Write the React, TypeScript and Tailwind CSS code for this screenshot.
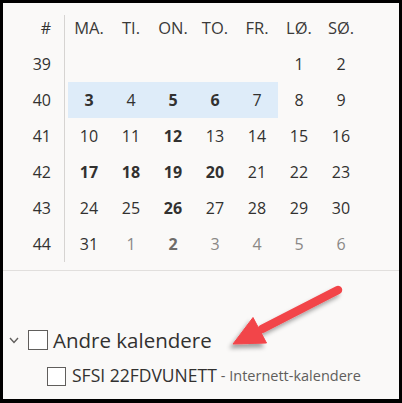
import React from "react";

type Day = { n?: number; bold?: boolean; muted?: boolean };

const headers = ["MA.", "TI.", "ON.", "TO.", "FR.", "LØ.", "SØ."];

const weeks: { no: number; days: Day[]; highlight?: boolean }[] = [
  { no: 39, days: [{}, {}, {}, {}, {}, { n: 1 }, { n: 2 }] },
  {
    no: 40,
    highlight: true,
    days: [{ n: 3, bold: true }, { n: 4 }, { n: 5, bold: true }, { n: 6, bold: true }, { n: 7 }, { n: 8 }, { n: 9 }],
  },
  { no: 41, days: [{ n: 10 }, { n: 11 }, { n: 12, bold: true }, { n: 13 }, { n: 14 }, { n: 15 }, { n: 16 }] },
  {
    no: 42,
    days: [{ n: 17, bold: true }, { n: 18, bold: true }, { n: 19, bold: true }, { n: 20, bold: true }, { n: 21 }, { n: 22 }, { n: 23 }],
  },
  { no: 43, days: [{ n: 24 }, { n: 25 }, { n: 26, bold: true }, { n: 27 }, { n: 28 }, { n: 29 }, { n: 30 }] },
  {
    no: 44,
    days: [
      { n: 31 },
      { n: 1, muted: true },
      { n: 2, muted: true, bold: true },
      { n: 3, muted: true },
      { n: 4, muted: true },
      { n: 5, muted: true },
      { n: 6, muted: true },
    ],
  },
];

function Checkbox({ size }: { size: string }) {
  return <div className={`${size} shrink-0 border border-[#605e5c] bg-white`}></div>;
}

function Arrow() {
  return (
    <svg className="absolute left-[-3px] top-[-3px] pointer-events-none" width="402" height="403" viewBox="0 0 402 403">
      <defs>
        <filter id="shadow" x="-20%" y="-20%" width="140%" height="160%">
          <feDropShadow dx="-3" dy="4" stdDeviation="2" floodColor="#000" floodOpacity="0.35" />
        </filter>
      </defs>
      <g filter="url(#shadow)" fill="#f2454a" stroke="#f2454a">
        <line x1="338" y1="290" x2="262" y2="329" strokeWidth="8.5" strokeLinecap="round" />
        <polygon points="233,344 253,317.5 266.5,343" strokeWidth="1" strokeLinejoin="round" />
      </g>
    </svg>
  );
}

export default function App() {
  return (
    <div
      className="relative w-[402px] h-[403px] bg-[#faf9f8] border-black border-t-[3px] border-x-[3px] border-b-[4px] overflow-hidden text-[#323130]"
      style={{ fontFamily: '"Open Sans", "Noto Sans", sans-serif' }}
    >
      {/* month grid */}
      <div className="flex pt-[12px]">
        <div className="w-[62px] border-r border-[#d6d4d2] pr-[13px] text-right text-[16px]">
          <div className="h-[31px] leading-[26px]">#</div>
          {weeks.map((w) => (
            <div key={w.no} className="h-[36px] leading-[36px]">
              {w.no}
            </div>
          ))}
        </div>
        <div className="pl-[3px]">
          <div className="grid grid-cols-[repeat(7,42px)] h-[31px] leading-[26px] text-[16.5px] text-[#3b3a39]">
            {headers.map((h) => (
              <div key={h} className="text-center">
                {h}
              </div>
            ))}
          </div>
          {weeks.map((w) => (
            <div key={w.no} className="grid grid-cols-[repeat(7,42px)] h-[36px] leading-[36px] text-[16px]">
              {w.days.map((d, i) => (
                <div
                  key={i}
                  className={`text-center ${w.highlight && i < 5 ? "bg-[#deecf9]" : ""} ${
                    d.bold ? "font-bold" : ""
                  } ${d.muted ? (d.bold ? "text-[#6e6c6a]" : "text-[#8a8886]") : ""}`}
                >
                  {d.n ?? ""}
                </div>
              ))}
            </div>
          ))}
        </div>
      </div>

      <div className="mt-[8px] border-t border-[#e1dfdd]"></div>

      {/* other calendars */}
      <div className="pt-[51px]">
        <div className="flex items-center h-[36px]">
          <svg className="ml-[6px] shrink-0" width="10" height="7" viewBox="0 0 10 7">
            <path d="M1 1l4 4.5L9 1" fill="none" stroke="#605e5c" strokeWidth="1.4" />
          </svg>
          <div className="ml-[9px]">
            <Checkbox size="w-[20px] h-[20px]" />
          </div>
          <span className="ml-[5px] text-[20.5px] leading-none">Andre kalendere</span>
        </div>
        <div className="flex items-center h-[36px] pl-[44px]">
          <Checkbox size="w-[19px] h-[19px]" />
          <span className="ml-[6px] text-[17.5px] leading-none">SFSI 22FDVUNETT</span>
          <span className="ml-[4px] text-[14.5px] leading-none text-[#605e5c]">- Internett-kalendere</span>
        </div>
      </div>

      <Arrow />
    </div>
  );
}
